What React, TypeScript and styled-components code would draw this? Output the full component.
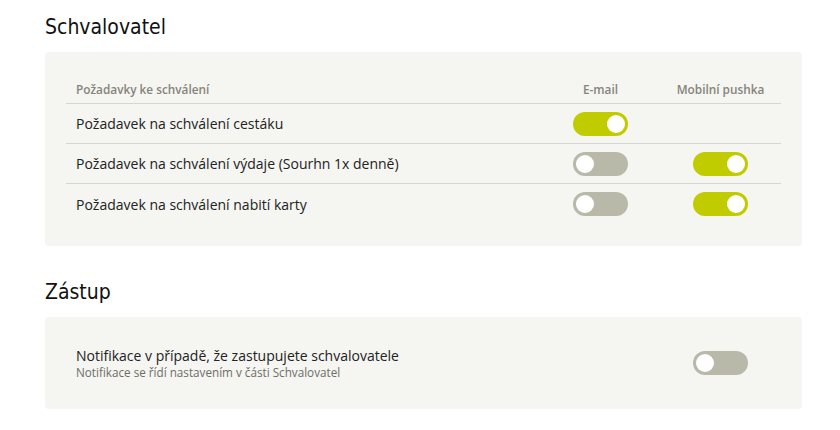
import React from "react";
import styled, { createGlobalStyle } from "styled-components";

const Global = createGlobalStyle`
  html, body { margin: 0; padding: 0; background: #ffffff; }
  body { font-family: "Open Sans", "Liberation Sans", sans-serif; color: #2b2b2b; }
`;

const Page = styled.div`
  width: 840px;
  padding: 13px 38px 0 45px;
  box-sizing: border-box;
  display: flex;
  flex-direction: column;
`;

const Heading = styled.h2`
  margin: 0;
  height: 39px;
  font-family: "DejaVu Sans Condensed", "DejaVu Sans", sans-serif;
  font-stretch: condensed;
  font-weight: 400;
  font-size: 21px;
  line-height: 28px;
  color: #111;
`;

const Panel = styled.section<{ $pad: string; $last?: boolean }>`
  background: #f5f5f1;
  border-radius: 4px;
  padding: ${(p) => p.$pad};
  margin-bottom: ${(p) => (p.$last ? "0" : "32px")};
`;

const Table = styled.div`
  display: grid;
  grid-template-columns: 1fr 119px 121px;
`;

const HeadCell = styled.div<{ $center?: boolean }>`
  box-sizing: border-box;
  font-size: 11.8px;
  font-weight: 600;
  color: #85857b;
  height: 30px;
  line-height: 30px;
  padding-left: ${(p) => (p.$center ? "0" : "10px")};
  text-align: ${(p) => (p.$center ? "center" : "left")};
  border-bottom: 1px solid #d6d6ce;
`;

const Cell = styled.div<{ $center?: boolean; $last?: boolean }>`
  box-sizing: border-box;
  height: 40px;
  display: flex;
  align-items: center;
  justify-content: ${(p) => (p.$center ? "center" : "flex-start")};
  padding-left: ${(p) => (p.$center ? "0" : "10px")};
  font-size: 14px;
  color: #222;
  border-bottom: ${(p) => (p.$last ? "none" : "1px solid #d6d6ce")};
`;

const Track = styled.span<{ $on: boolean }>`
  position: relative;
  display: inline-block;
  width: 55px;
  height: 24px;
  border-radius: 12px;
  background: ${(p) => (p.$on ? "#c1cc00" : "#b9b9aa")};
  &::after {
    content: "";
    position: absolute;
    top: 3px;
    left: ${(p) => (p.$on ? "34px" : "3px")};
    width: 18px;
    height: 18px;
    border-radius: 50%;
    background: #fff;
  }
`;

const NotifRow = styled.div`
  display: flex;
  align-items: center;
`;

const NotifText = styled.div`
  flex: 1;
  padding-left: 10px;
  display: flex;
  flex-direction: column;
`;

const NotifTitle = styled.div`
  font-size: 14px;
  line-height: 19px;
  color: #222;
`;

const NotifSub = styled.div`
  font-size: 11.7px;
  line-height: 15px;
  color: #6e6e66;
`;

const ToggleSlot = styled.div`
  width: 121px;
  display: flex;
  justify-content: center;
`;

const rows = [
  { label: "Požadavek na schválení cestáku", email: true, push: null as boolean | null },
  { label: "Požadavek na schválení výdaje (Sourhn 1x denně)", email: false, push: true },
  { label: "Požadavek na schválení nabití karty", email: false, push: true },
];

export default function App() {
  return (
    <Page>
      <Global />
      <Heading>Schvalovatel</Heading>
      <Panel $pad="22px 21px 22px 21px">
        <Table>
          <HeadCell>Požadavky ke schválení</HeadCell>
          <HeadCell $center>E-mail</HeadCell>
          <HeadCell $center>Mobilní pushka</HeadCell>
          {rows.map((r, i) => {
            const last = i === rows.length - 1;
            return (
              <React.Fragment key={r.label}>
                <Cell $last={last}>{r.label}</Cell>
                <Cell $center $last={last}>
                  <Track $on={r.email} />
                </Cell>
                <Cell $center $last={last}>
                  {r.push !== null && <Track $on={r.push} />}
                </Cell>
              </React.Fragment>
            );
          })}
        </Table>
      </Panel>
      <Heading>Zástup</Heading>
      <Panel $pad="29px 21px 29px 21px" $last>
        <NotifRow>
          <NotifText>
            <NotifTitle>Notifikace v případě, že zastupujete schvalovatele</NotifTitle>
            <NotifSub>Notifikace se řídí nastavením v části Schvalovatel</NotifSub>
          </NotifText>
          <ToggleSlot>
            <Track $on={false} />
          </ToggleSlot>
        </NotifRow>
      </Panel>
    </Page>
  );
}
